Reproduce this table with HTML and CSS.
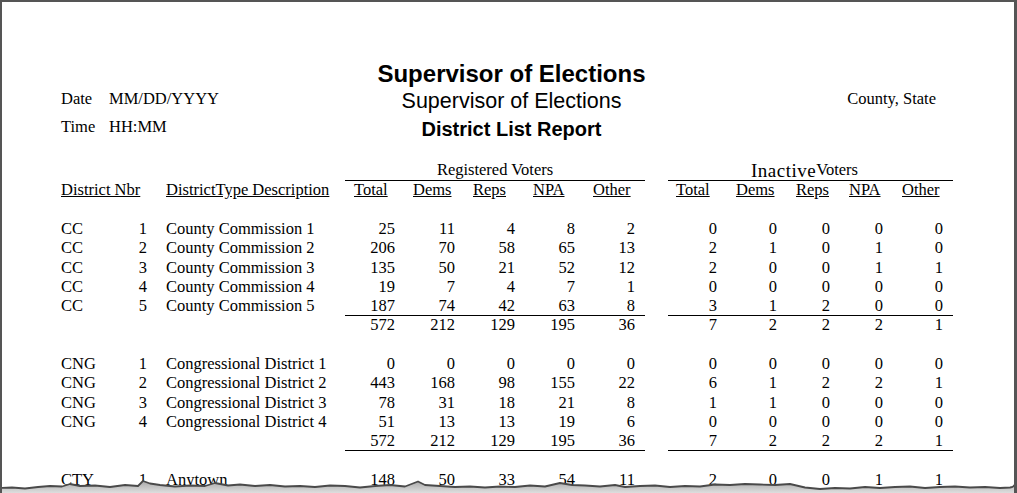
FILE: index.html
```html
<!DOCTYPE html>
<html lang="en">
<head>
<meta charset="utf-8">
<title>District List Report</title>
<link rel="stylesheet" href="styles.css">
</head>
<body>
<div class="paper">
  <header class="report-head">
    <div class="meta">
      <span>Date</span><span>MM/DD/YYYY</span>
      <span>Time</span><span>HH:MM</span>
    </div>
    <div class="titles">
      <div class="t1">Supervisor of Elections</div>
      <div class="t2">Supervisor of Elections</div>
      <div class="t3">District List Report</div>
    </div>
    <div class="county">County, State</div>
  </header>

  <section class="report-table">
    <div class="row grp-row">
      <div class="grp reg-grp">Registered Voters</div>
      <div class="grp inac-grp"><span class="big">Inactive</span>Voters</div>
    </div>
    <div class="row head-row">
      <div class="h-code"><u>District Nbr</u></div>
      <div class="desc"><u>DistrictType Description</u></div>
      <div class="nums reg head"><span><u>Total</u></span><span><u>Dems</u></span><span><u>Reps</u></span><span><u>NPA</u></span><span><u>Other</u></span></div>
      <div class="nums inac head"><span><u>Total</u></span><span><u>Dems</u></span><span><u>Reps</u></span><span><u>NPA</u></span><span><u>Other</u></span></div>
    </div>
    <div class="row blank"></div>

    <div class="row"><div>CC</div><div class="nbr">1</div><div class="desc">County Commission 1</div>
      <div class="nums reg"><span>25</span><span>11</span><span>4</span><span>8</span><span>2</span></div>
      <div class="nums inac"><span>0</span><span>0</span><span>0</span><span>0</span><span>0</span></div></div>
    <div class="row"><div>CC</div><div class="nbr">2</div><div class="desc">County Commission 2</div>
      <div class="nums reg"><span>206</span><span>70</span><span>58</span><span>65</span><span>13</span></div>
      <div class="nums inac"><span>2</span><span>1</span><span>0</span><span>1</span><span>0</span></div></div>
    <div class="row"><div>CC</div><div class="nbr">3</div><div class="desc">County Commission 3</div>
      <div class="nums reg"><span>135</span><span>50</span><span>21</span><span>52</span><span>12</span></div>
      <div class="nums inac"><span>2</span><span>0</span><span>0</span><span>1</span><span>1</span></div></div>
    <div class="row"><div>CC</div><div class="nbr">4</div><div class="desc">County Commission 4</div>
      <div class="nums reg"><span>19</span><span>7</span><span>4</span><span>7</span><span>1</span></div>
      <div class="nums inac"><span>0</span><span>0</span><span>0</span><span>0</span><span>0</span></div></div>
    <div class="row"><div>CC</div><div class="nbr">5</div><div class="desc">County Commission 5</div>
      <div class="nums reg"><span>187</span><span>74</span><span>42</span><span>63</span><span>8</span></div>
      <div class="nums inac"><span>3</span><span>1</span><span>2</span><span>0</span><span>0</span></div></div>
    <div class="row total rule-top">
      <div class="nums reg"><span>572</span><span>212</span><span>129</span><span>195</span><span>36</span></div>
      <div class="nums inac"><span>7</span><span>2</span><span>2</span><span>2</span><span>1</span></div></div>
    <div class="row blank"></div>

    <div class="row"><div>CNG</div><div class="nbr">1</div><div class="desc">Congressional District 1</div>
      <div class="nums reg"><span>0</span><span>0</span><span>0</span><span>0</span><span>0</span></div>
      <div class="nums inac"><span>0</span><span>0</span><span>0</span><span>0</span><span>0</span></div></div>
    <div class="row"><div>CNG</div><div class="nbr">2</div><div class="desc">Congressional District 2</div>
      <div class="nums reg"><span>443</span><span>168</span><span>98</span><span>155</span><span>22</span></div>
      <div class="nums inac"><span>6</span><span>1</span><span>2</span><span>2</span><span>1</span></div></div>
    <div class="row"><div>CNG</div><div class="nbr">3</div><div class="desc">Congressional District 3</div>
      <div class="nums reg"><span>78</span><span>31</span><span>18</span><span>21</span><span>8</span></div>
      <div class="nums inac"><span>1</span><span>1</span><span>0</span><span>0</span><span>0</span></div></div>
    <div class="row"><div>CNG</div><div class="nbr">4</div><div class="desc">Congressional District 4</div>
      <div class="nums reg"><span>51</span><span>13</span><span>13</span><span>19</span><span>6</span></div>
      <div class="nums inac"><span>0</span><span>0</span><span>0</span><span>0</span><span>0</span></div></div>
    <div class="row total rule-bottom">
      <div class="nums reg"><span>572</span><span>212</span><span>129</span><span>195</span><span>36</span></div>
      <div class="nums inac"><span>7</span><span>2</span><span>2</span><span>2</span><span>1</span></div></div>
    <div class="row blank"></div>

    <div class="row"><div>CTY</div><div class="nbr">1</div><div class="desc">Anytown</div>
      <div class="nums reg"><span>148</span><span>50</span><span>33</span><span>54</span><span>11</span></div>
      <div class="nums inac"><span>2</span><span>0</span><span>0</span><span>1</span><span>1</span></div></div>
  </section>

  <svg class="torn" width="1017" height="17" viewBox="0 0 1017 17" aria-hidden="true">
    <defs>
      <linearGradient id="shade" x1="0" y1="0" x2="0" y2="1">
        <stop offset="0" stop-color="#8f8f8f"/>
        <stop offset="0.55" stop-color="#bdbdbd"/>
        <stop offset="1" stop-color="#dedede"/>
      </linearGradient>
    </defs>
    <path fill="url(#shade)" d="M0 12 L12 11.5 L25 12.5 L38 11 L50 10 L62 10.5 L70 8 L80 10 L95 9.5 L110 11 L125 9 L138 10 L143 5 L150 7.5 L160 9 L175 10.5 L190 9.5 L205 10 L215 7 L228 9.5 L240 8.5 L255 10 L270 9 L285 10.5 L300 10 L315 11 L330 9.5 L345 10 L360 11.5 L375 10 L390 9 L405 10.5 L418 5.5 L425 9 L440 10 L455 11 L470 10.5 L485 11.5 L500 10.5 L515 11 L530 9.5 L545 10.5 L560 7 L572 9 L585 9.5 L600 10.5 L615 9 L625 11 L640 10 L655 9.5 L670 11 L685 10 L700 10.5 L715 8.5 L730 9 L745 8 L760 8.5 L775 9 L790 8 L805 11.5 L820 13 L835 12 L850 12.5 L865 11 L880 12 L895 11 L910 10.5 L925 12 L940 11 L955 10.5 L970 11.5 L985 11 L1000 12 L1010 11.5 Q1015 11 1015.5 6 L1015.5 0 L1017 0 L1017 17 L0 17 Z"/>
    <path fill="none" stroke="#4a4a4a" stroke-width="1.8" stroke-linejoin="round" d="M0 12 L12 11.5 L25 12.5 L38 11 L50 10 L62 10.5 L70 8 L80 10 L95 9.5 L110 11 L125 9 L138 10 L143 5 L150 7.5 L160 9 L175 10.5 L190 9.5 L205 10 L215 7 L228 9.5 L240 8.5 L255 10 L270 9 L285 10.5 L300 10 L315 11 L330 9.5 L345 10 L360 11.5 L375 10 L390 9 L405 10.5 L418 5.5 L425 9 L440 10 L455 11 L470 10.5 L485 11.5 L500 10.5 L515 11 L530 9.5 L545 10.5 L560 7 L572 9 L585 9.5 L600 10.5 L615 9 L625 11 L640 10 L655 9.5 L670 11 L685 10 L700 10.5 L715 8.5 L730 9 L745 8 L760 8.5 L775 9 L790 8 L805 11.5 L820 13 L835 12 L850 12.5 L865 11 L880 12 L895 11 L910 10.5 L925 12 L940 11 L955 10.5 L970 11.5 L985 11 L1000 12 L1010 11.5 Q1015 11 1015.5 6 L1015.5 0"/>
  </svg>
</div>
</body>
</html>
```

FILE: styles.css
```css
html, body {
  margin: 0;
  padding: 0;
  background: #ffffff;
}

.paper {
  position: relative;
  width: 1017px;
  height: 493px;
  box-sizing: border-box;
  border-style: solid;
  border-color: #555555;
  border-width: 2px 3px 0 2px;
  padding: 58.7px 52px 0 59px;
  overflow: hidden;
  background: #ffffff;
  color: #000000;
  font-family: "Liberation Serif", "Times New Roman", serif;
  font-size: 16.5px;
}

/* ---------- header ---------- */
.report-head {
  display: grid;
  grid-template-columns: 1fr auto 1fr;
  align-items: start;
}

.meta {
  display: grid;
  grid-template-columns: 48px auto;
  line-height: 28px;
  margin-top: 24.7px;
}

.titles {
  text-align: center;
  font-family: "Liberation Sans", Arial, sans-serif;
}

.t1 {
  font-weight: bold;
  font-size: 24px;
  line-height: 26px;
}

.t2 {
  font-size: 21.5px;
  line-height: 25px;
  margin-top: 2px;
}

.t3 {
  font-weight: bold;
  font-size: 20px;
  line-height: 24px;
  margin-top: 3.3px;
}

.county {
  justify-self: end;
  margin-right: 26px;
  margin-top: 24.7px;
  line-height: 28px;
}

/* ---------- table ---------- */
.report-table {
  margin-top: 18px;
}

.row {
  display: grid;
  grid-template-columns: 60px 26px 198px 300px 23px 285px;
  line-height: 19.3px;
  height: 19.3px;
  white-space: nowrap;
}

.nbr {
  text-align: right;
}

.desc {
  grid-column: 3;
  padding-left: 19px;
}

.h-code {
  grid-column: 1 / span 2;
}

.grp-row {
  height: 21px;
  line-height: 21px;
}

.grp {
  text-align: center;
  border-bottom: 1px solid #000000;
}

.reg-grp {
  grid-column: 4;
}

.inac-grp {
  grid-column: 6;
  padding-right: 12px;
}

.big {
  font-size: 19px;
  letter-spacing: 0.5px;
  line-height: 0;
  vertical-align: -2px;
}

.nums {
  display: flex;
}

.nums > span {
  box-sizing: border-box;
  text-align: right;
  flex: none;
}

.reg {
  grid-column: 4;
  padding-right: 10px;
}

.inac {
  grid-column: 6;
  padding-right: 10px;
}

.reg > span { width: 60px; }
.reg > span:first-child { width: 50px; }

.inac > span:nth-child(1) { width: 49px; }
.inac > span:nth-child(2) { width: 60px; }
.inac > span:nth-child(3) { width: 53px; }
.inac > span:nth-child(4) { width: 53px; }
.inac > span:nth-child(5) { width: 60px; }

.nums.head > span {
  text-align: left;
}

.reg.head > span { padding-left: 18px; }
.reg.head > span:first-child { padding-left: 9px; }
.inac.head > span { padding-left: 19px; }
.inac.head > span:first-child { padding-left: 8px; }

.rule-top .nums {
  box-shadow: inset 0 1px 0 #000000;
}

.rule-bottom .nums {
  box-shadow: inset 0 -1px 0 #000000;
}

/* ---------- torn bottom edge ---------- */
.torn {
  position: absolute;
  left: -2px;
  bottom: 0;
  display: block;
}
```
